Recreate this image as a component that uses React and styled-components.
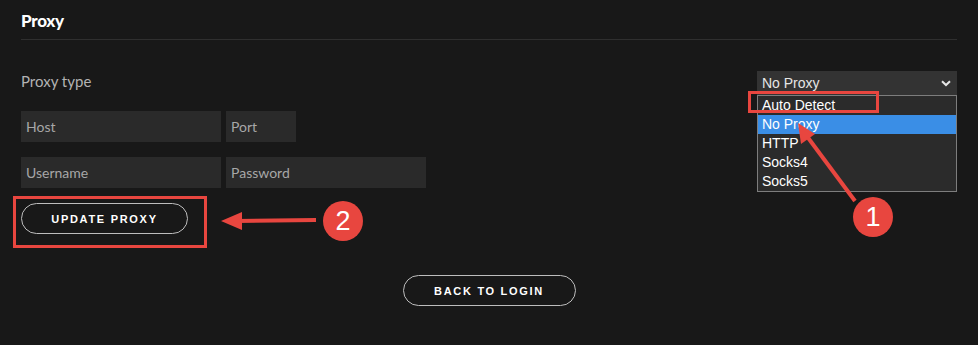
import React from "react";
import styled, { createGlobalStyle } from "styled-components";

const Global = createGlobalStyle`
  html, body { margin: 0; padding: 0; background: #181818; }
  body { font-family: "Lato", "Open Sans", sans-serif; color: #fff; }
  * { box-sizing: border-box; }
`;

const Page = styled.div`
  position: relative;
  width: 978px;
  height: 345px;
  padding: 0 21px;
  overflow: hidden;
`;

const Header = styled.div`
  height: 40px;
  padding-top: 10px;
  border-bottom: 1px solid #2f2f2f;
`;

const Title = styled.h2`
  margin: 0;
  font-family: "Lato", sans-serif;
  font-weight: 900;
  font-size: 17px;
  line-height: 22px;
  letter-spacing: -0.3px;
  color: #fff;
`;

const TypeRow = styled.div`
  display: flex;
  justify-content: space-between;
  align-items: center;
  margin-top: 31px;
  height: 24px;
`;

const Label = styled.span`
  font-size: 15px;
  color: #b3b3b3;
  margin-bottom: 4px;
`;

const SelectWrap = styled.div`
  position: relative;
  width: 200px;
`;

const SelectBox = styled.div`
  height: 24px;
  background: #333;
  display: flex;
  align-items: center;
  justify-content: space-between;
  padding: 0 6px 0 5px;
  font-family: "Liberation Sans", Arial, sans-serif;
  font-size: 14px;
  color: #e6e6e6;
`;

const Options = styled.ul`
  position: absolute;
  top: 24px;
  left: 0;
  width: 200px;
  margin: 0;
  padding: 0;
  list-style: none;
  background: #2b2b2b;
  border: 1px solid #7d7d7d;
  font-family: "Liberation Sans", Arial, sans-serif;
  font-size: 14px;
  z-index: 2;
`;

const Option = styled.li`
  height: 19px;
  line-height: 19px;
  padding-left: 4px;
  color: #fff;
  background: ${(p) => (p.$active ? "#3a8ee6" : "transparent")};
`;

const Fields = styled.div`
  display: flex;
  flex-direction: column;
  gap: 15px;
  margin-top: 16px;
`;

const FieldRow = styled.div`
  display: flex;
  gap: 5px;
`;

const Input = styled.div`
  width: ${(p) => p.$w}px;
  height: 31px;
  background: #2a2a2a;
  color: #a7a7a7;
  font-size: 14px;
  display: flex;
  align-items: center;
  padding-left: 5px;
`;

const Pill = styled.button`
  width: ${(p) => p.$w}px;
  height: 31px;
  border-radius: 16px;
  border: 1px solid #bdbdbd;
  background: transparent;
  color: #fff;
  font-family: "Liberation Sans", Arial, sans-serif;
  font-weight: 700;
  font-size: 11px;
  letter-spacing: 1.7px;
  text-transform: uppercase;
  padding: 0;
`;

const UpdateRow = styled.div`
  margin-top: 15px;
`;

const BackRow = styled.div`
  display: flex;
  justify-content: center;
  margin-top: 41px;
`;

const RedBox = styled.div`
  position: absolute;
  border: 3px solid #e8463f;
  pointer-events: none;
`;

const Overlay = styled.svg`
  position: absolute;
  left: 0;
  top: 0;
  pointer-events: none;
  z-index: 5;
`;

const Badge = styled.div`
  position: absolute;
  width: 40px;
  height: 40px;
  border-radius: 50%;
  background: #e8463f;
  color: #fff;
  font-family: "Liberation Sans", Arial, sans-serif;
  font-size: 27px;
  display: flex;
  align-items: center;
  justify-content: center;
  z-index: 6;
`;

const Chevron = () => (
  <svg width="10" height="7" viewBox="0 0 10 7">
    <path d="M1 1.2 L5 5 L9 1.2" stroke="#e6e6e6" strokeWidth="2" fill="none" />
  </svg>
);

export default function App() {
  return (
    <Page>
      <Global />
      <Header>
        <Title>Proxy</Title>
      </Header>
      <TypeRow>
        <Label>Proxy type</Label>
        <SelectWrap>
          <SelectBox>
            <span>No Proxy</span>
            <Chevron />
          </SelectBox>
          <Options>
            <Option>Auto Detect</Option>
            <Option $active>No Proxy</Option>
            <Option>HTTP</Option>
            <Option>Socks4</Option>
            <Option>Socks5</Option>
          </Options>
        </SelectWrap>
      </TypeRow>
      <Fields>
        <FieldRow>
          <Input $w={200}>Host</Input>
          <Input $w={70}>Port</Input>
        </FieldRow>
        <FieldRow>
          <Input $w={200}>Username</Input>
          <Input $w={200}>Password</Input>
        </FieldRow>
      </Fields>
      <UpdateRow>
        <Pill $w={167}>Update Proxy</Pill>
      </UpdateRow>
      <BackRow>
        <Pill $w={173}>Back to login</Pill>
      </BackRow>

      <RedBox style={{ left: 13, top: 196, width: 194, height: 52 }} />
      <RedBox style={{ left: 748, top: 91, width: 131, height: 22, zIndex: 3 }} />

      <Overlay width="978" height="345" viewBox="0 0 978 345">
        <line x1="316" y1="220" x2="236" y2="221" stroke="#e8463f" strokeWidth="4" />
        <polygon points="221,221 242,212 242,230" fill="#e8463f" />
        <line x1="855" y1="201" x2="806" y2="135" stroke="#e8463f" strokeWidth="4" />
        <polygon points="798,123 815,134 801,144" fill="#e8463f" />
      </Overlay>
      <Badge style={{ left: 323, top: 201 }}>2</Badge>
      <Badge style={{ left: 853, top: 197 }}>1</Badge>
    </Page>
  );
}
